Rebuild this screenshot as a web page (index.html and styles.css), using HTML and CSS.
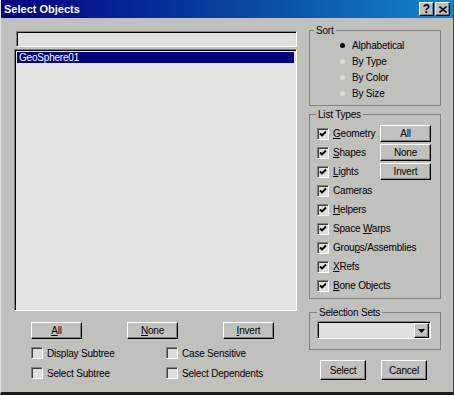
FILE: index.html
```html
<!DOCTYPE html>
<html lang="en">

<head>
    <meta charset="UTF-8">
    <title>Select Objects</title>
    <link rel="stylesheet" href="styles.css">
</head>

<body>
    <div class="window">
        <div class="titlebar">
            <span class="title">Select Objects</span>
            <div class="title-buttons">
                <button class="tbtn help">?</button>
                <button class="tbtn">
                    <svg width="8" height="7" viewBox="0 0 8 7"><path d="M0.5 0.5 L7.5 6.5 M7.5 0.5 L0.5 6.5" stroke="#000" stroke-width="1.6"/></svg>
                </button>
            </div>
        </div>

        <div class="content">
            <div class="left">
                <div class="field search"></div>
                <div class="listbox">
                    <div class="item selected">GeoSphere01</div>
                </div>
                <div class="list-buttons">
                    <button class="btn"><u>A</u>ll</button>
                    <button class="btn"><u>N</u>one</button>
                    <button class="btn"><u>I</u>nvert</button>
                </div>
                <div class="options">
                    <label class="check"><span class="box"></span>Display Subtree</label>
                    <label class="check"><span class="box"></span>Case Sensitive</label>
                    <label class="check"><span class="box"></span>Select Subtree</label>
                    <label class="check"><span class="box"></span>Select Dependents</label>
                </div>
            </div>

            <div class="right">
                <fieldset class="group sort">
                    <legend>Sort</legend>
                    <div class="radio-row"><span class="radio on"></span>Alphabetical</div>
                    <div class="radio-row"><span class="radio"></span>By Type</div>
                    <div class="radio-row"><span class="radio"></span>By Color</div>
                    <div class="radio-row"><span class="radio"></span>By Size</div>
                </fieldset>

                <fieldset class="group types">
                    <legend>List Types</legend>
                    <div class="types-grid">
                        <label class="check row"><span class="box checked"></span><span><u>G</u>eometry</span></label>
                        <button class="btn side">All</button>
                        <label class="check row"><span class="box checked"></span><span><u>S</u>hapes</span></label>
                        <button class="btn side">None</button>
                        <label class="check row"><span class="box checked"></span><span><u>L</u>ights</span></label>
                        <button class="btn side">Invert</button>
                        <label class="check row wide"><span class="box checked"></span><span>Cameras</span></label>
                        <label class="check row wide"><span class="box checked"></span><span><u>H</u>elpers</span></label>
                        <label class="check row wide"><span class="box checked"></span><span>Space <u>W</u>arps</span></label>
                        <label class="check row wide"><span class="box checked"></span><span>Grou<u>p</u>s/Assemblies</span></label>
                        <label class="check row wide"><span class="box checked"></span><span><u>X</u>Refs</span></label>
                        <label class="check row wide"><span class="box checked"></span><span><u>B</u>one Objects</span></label>
                    </div>
                </fieldset>

                <fieldset class="group sets">
                    <legend>Selection Sets</legend>
                    <div class="dropdown">
                        <span class="drop-btn">
                            <svg width="7" height="4" viewBox="0 0 7 4"><path d="M0 0 H7 L3.5 4 Z" fill="#000"/></svg>
                        </span>
                    </div>
                </fieldset>

                <div class="dialog-buttons">
                    <button class="btn big">Select</button>
                    <button class="btn big">Cancel</button>
                </div>
            </div>
        </div>
    </div>
</body>

</html>
```

FILE: styles.css
```css
* {
    box-sizing: border-box;
}

body {
    margin: 0;
    font-family: "Liberation Sans", Arial, sans-serif;
    font-size: 10px;
    letter-spacing: -0.2px;
    color: #000;
}

.window {
    width: 454px;
    height: 395px;
    background: #c0c0bd;
    border-left: 1px solid #e0e0e0;
    border-right: 1px solid #404040;
    border-bottom: 3px solid #1a1a1a;
    overflow: hidden;
}

.titlebar {
    height: 18px;
    background: linear-gradient(90deg, #000080, #0b4fa8 60%, #1084d0);
    display: flex;
    align-items: center;
    justify-content: space-between;
    padding: 0 3px 0 3px;
}

.title {
    color: #fff;
    font-weight: bold;
    font-size: 11px;
    letter-spacing: 0;
}

.title-buttons {
    display: flex;
    gap: 1px;
}

.tbtn {
    width: 15px;
    height: 14px;
    padding: 0;
    background: #c0c0bd;
    border-top: 1px solid #fff;
    border-left: 1px solid #fff;
    border-right: 1px solid #000;
    border-bottom: 1px solid #000;
    box-shadow: inset -1px -1px #808080;
    display: flex;
    align-items: center;
    justify-content: center;
    font-family: "Liberation Sans", Arial, sans-serif;
    font-weight: bold;
    font-size: 12px;
    line-height: 12px;
}

.content {
    display: flex;
    gap: 12px;
    padding: 6px 12px 0 13px;
    align-items: flex-start;
}

/* left column */

.left {
    width: 283px;
    padding-top: 7px;
}

.field {
    background: #e0e0dc;
    border-top: 1px solid #808080;
    border-left: 1px solid #808080;
    border-right: 1px solid #fff;
    border-bottom: 1px solid #fff;
    box-shadow: inset 1px 1px #000, inset -1px -1px #dcdcdc;
}

.search {
    height: 16px;
    margin-left: 2px;
}

.listbox {
    margin-top: 2px;
    height: 262px;
    background: #e3e3df;
    border-top: 1px solid #808080;
    border-left: 1px solid #808080;
    border-right: 1px solid #fff;
    border-bottom: 1px solid #fff;
    box-shadow: inset 1px 1px #000;
    padding: 2px;
}

.item {
    height: 11px;
    line-height: 11px;
    padding-left: 2px;
}

.item.selected {
    background: #000080;
    color: #fff;
}

.btn {
    height: 17px;
    padding: 0;
    background: #c0c0bd;
    border-top: 1px solid #fff;
    border-left: 1px solid #fff;
    border-right: 1px solid #000;
    border-bottom: 1px solid #000;
    box-shadow: inset -1px -1px #808080;
    font-family: "Liberation Sans", Arial, sans-serif;
    font-size: 10px;
    letter-spacing: -0.2px;
    color: #000;
}

.list-buttons {
    display: flex;
    gap: 45px;
    margin-top: 11px;
    padding-left: 17px;
}

.list-buttons .btn {
    width: 51px;
}

.options {
    display: grid;
    grid-template-columns: 135px 1fr;
    grid-auto-rows: 20px;
    margin-top: 4px;
    padding-left: 17px;
}

.check {
    display: flex;
    align-items: center;
    gap: 4px;
}

.box {
    width: 12px;
    height: 12px;
    flex: none;
    background: #dededa;
    border-top: 1px solid #808080;
    border-left: 1px solid #808080;
    border-right: 1px solid #fff;
    border-bottom: 1px solid #fff;
    box-shadow: inset 1px 1px #404040;
}

.box.checked {
    background: #e0e0dc url("data:image/svg+xml,%3Csvg xmlns='http://www.w3.org/2000/svg' width='10' height='10' viewBox='0 0 10 10'%3E%3Cpath d='M2 4.5 L4 6.5 L8 2.5' fill='none' stroke='%23000' stroke-width='1.9'/%3E%3C/svg%3E") center / 10px 10px no-repeat;
}

/* right column */

.right {
    width: 132px;
}

.group {
    margin: 0;
    padding: 0;
    min-width: 0;
    border: 1px solid #808080;
}

.group legend {
    margin-left: 4px;
    padding: 0 2px;
    line-height: 13px;
}

.sort {
    padding-bottom: 4px;
}

.radio-row {
    height: 16px;
    display: flex;
    align-items: center;
    gap: 4px;
    padding-left: 26px;
}

.radio {
    width: 12px;
    height: 12px;
    display: flex;
    align-items: center;
    justify-content: center;
}

.radio::after {
    content: "";
    width: 5px;
    height: 5px;
    border-radius: 50%;
    background: #dcdcd8;
}

.radio.on::after {
    background: #000;
}

.types {
    margin-top: 2px;
    padding: 3px 9px 3px 7px;
}

.types legend {
    margin-left: -1px;
}

.types-grid {
    display: grid;
    grid-template-columns: 1fr 51px;
    grid-auto-rows: 19px;
}

.types-grid .wide {
    grid-column: span 2;
}

.btn.side {
    align-self: center;
}

.sets {
    margin-top: 7px;
    padding: 2px 9px 10px 7px;
}

.sets legend {
    margin-left: 0;
}

.dropdown {
    height: 18px;
    background: #e0e0dc;
    border-top: 1px solid #808080;
    border-left: 1px solid #808080;
    border-right: 1px solid #fff;
    border-bottom: 1px solid #fff;
    box-shadow: inset 1px 1px #000;
    display: flex;
    justify-content: flex-end;
    padding: 1px 1px 0 0;
}

.drop-btn {
    width: 15px;
    height: 15px;
    background: #c0c0bd;
    border-top: 1px solid #fff;
    border-left: 1px solid #fff;
    border-right: 1px solid #000;
    border-bottom: 1px solid #000;
    box-shadow: inset -1px -1px #808080;
    display: flex;
    align-items: center;
    justify-content: center;
}

.dialog-buttons {
    display: flex;
    gap: 15px;
    margin-top: 10px;
    padding-left: 11px;
}

.btn.big {
    width: 46px;
    height: 20px;
}
```
